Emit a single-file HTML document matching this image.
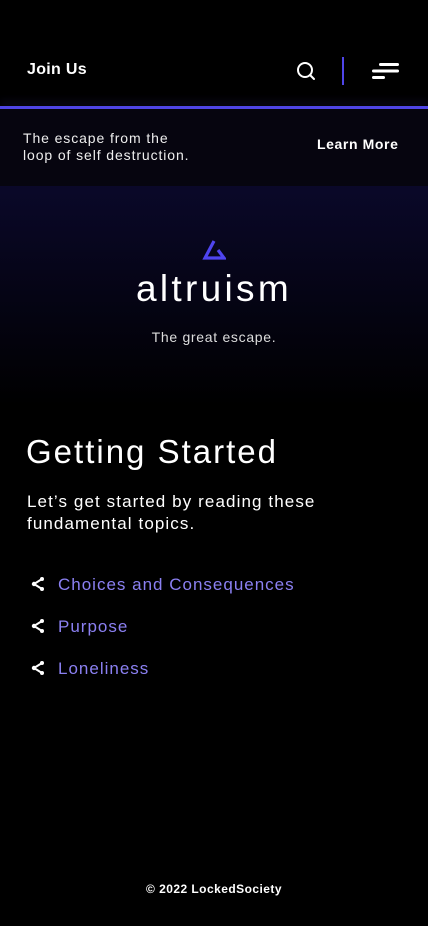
<!DOCTYPE html>
<html><head><meta charset="utf-8"><style>
*{margin:0;padding:0;box-sizing:border-box}
body{width:428px;height:926px;background:#000;font-family:"Liberation Sans",sans-serif;color:#fff;position:relative;overflow:hidden}
.a{position:absolute;white-space:nowrap}
</style></head><body>
<div class="a" style="left:27px;top:61px;font-size:16px;font-weight:bold;letter-spacing:0.3px">Join Us</div>
<svg class="a" style="left:296px;top:61px" width="20" height="20" viewBox="0 0 20 20"><circle cx="9" cy="9" r="7" fill="none" stroke="#fff" stroke-width="2"/><line x1="14" y1="14" x2="18" y2="18" stroke="#fff" stroke-width="2" stroke-linecap="round"/></svg>
<div class="a" style="left:342px;top:57px;width:2px;height:28px;background:#4f45e8"></div>
<svg class="a" style="left:372px;top:62px" width="28" height="18"><rect x="7" y="1" width="20" height="3" rx="1.5" fill="#fff"/><rect x="0" y="7.5" width="27" height="3" rx="1.5" fill="#fff"/><rect x="0" y="14" width="13" height="3" rx="1.5" fill="#fff"/></svg>
<div class="a" style="left:0;top:106px;width:428px;height:3px;background:#4f45e8;box-shadow:0 -4px 8px rgba(60,50,160,.3)"></div>
<div class="a" style="left:0;top:109px;width:428px;height:77px;background:#06050f"></div>
<div class="a" style="left:23px;top:130px;font-size:14px;line-height:17px;color:#eee;letter-spacing:0.9px">The escape from the<br>loop of self destruction.</div>
<div class="a" style="left:317px;top:136px;font-size:14px;font-weight:bold;letter-spacing:0.6px">Learn More</div>
<div class="a" style="left:0;top:186px;width:428px;height:220px;background:linear-gradient(#0a0829,#000)"></div>
<svg class="a" style="left:202px;top:239px" width="24" height="22" viewBox="0 0 24 22"><path d="M12 2 L3 19 H22 L16 11" fill="none" stroke="#4f45f0" stroke-width="3.2"/></svg>
<div class="a" style="left:0;width:428px;text-align:center;top:268px;font-size:37px;letter-spacing:3.3px">altruism</div>
<div class="a" style="left:0;width:428px;text-align:center;top:329px;font-size:14px;color:#ddd;letter-spacing:0.7px">The great escape.</div>
<div class="a" style="left:26px;top:433px;font-size:33px;letter-spacing:2px">Getting Started</div>
<div class="a" style="left:27px;top:491px;font-size:17px;line-height:22px;letter-spacing:1.1px">Let’s get started by reading these<br>fundamental topics.</div>
<svg width="0" height="0" style="position:absolute"><defs><g id="s"><line x1="11" y1="2" x2="3" y2="7" stroke="#fff" stroke-width="2"/><line x1="3" y1="7" x2="11" y2="12" stroke="#fff" stroke-width="2"/><circle cx="11" cy="2" r="2" fill="#fff"/><circle cx="3" cy="7" r="2.2" fill="#fff"/><circle cx="11" cy="12" r="2" fill="#fff"/></g></defs></svg>
<svg class="a" style="left:31px;top:577px" width="14" height="14"><use href="#s"/></svg>
<svg class="a" style="left:31px;top:619px" width="14" height="14"><use href="#s"/></svg>
<svg class="a" style="left:31px;top:661px" width="14" height="14"><use href="#s"/></svg>
<div class="a" style="left:58px;top:575px;font-size:17px;color:#8b80f2;letter-spacing:1px">Choices and Consequences</div>
<div class="a" style="left:58px;top:617px;font-size:17px;color:#8b80f2;letter-spacing:1px">Purpose</div>
<div class="a" style="left:58px;top:659px;font-size:17px;color:#8b80f2;letter-spacing:1px">Loneliness</div>
<div class="a" style="left:0;width:428px;text-align:center;top:882px;font-size:12px;font-weight:bold;letter-spacing:0.45px">© 2022 LockedSociety</div>
</body></html>
